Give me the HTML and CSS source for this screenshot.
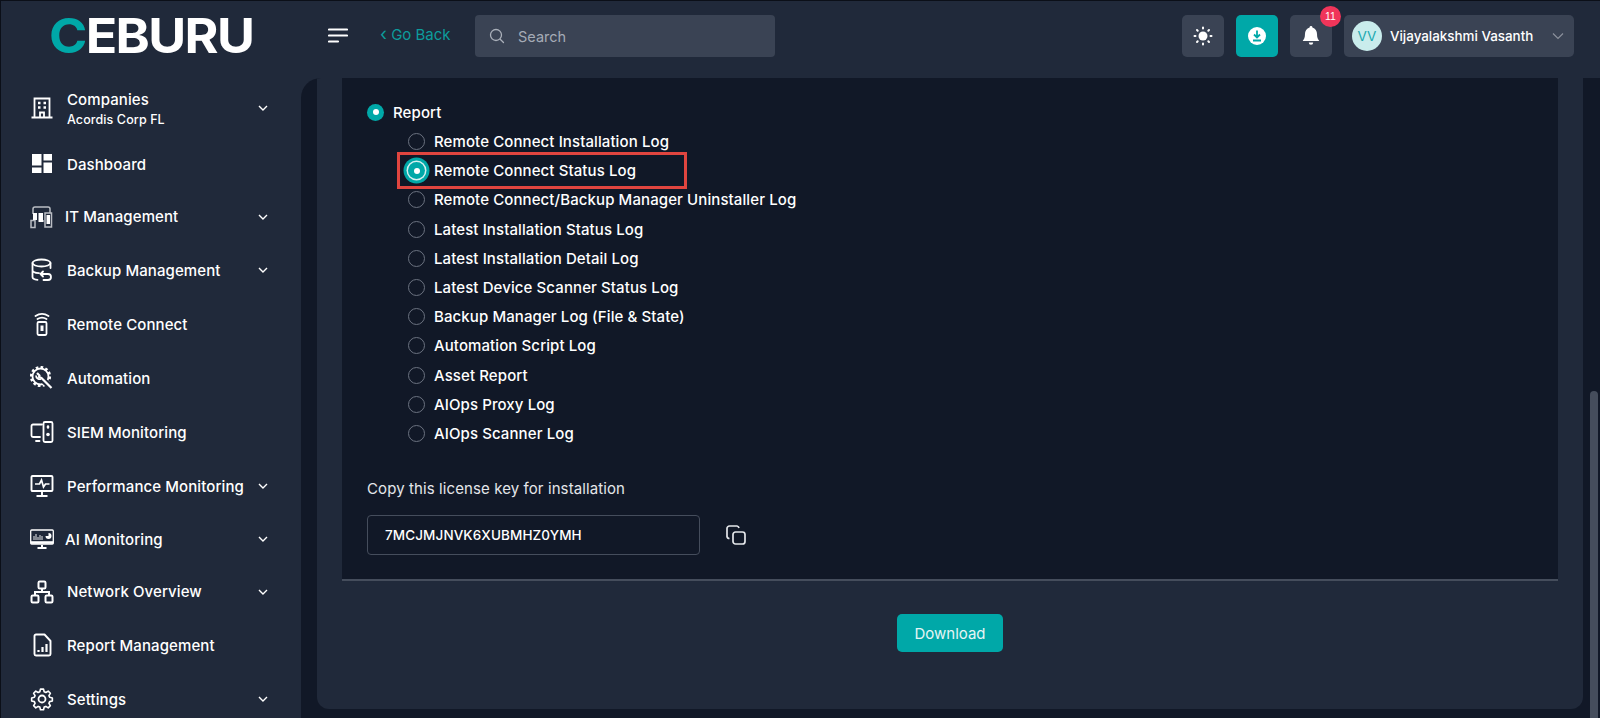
FILE: index.html
```html
<!DOCTYPE html>
<html lang="en">

<head>
  <meta charset="UTF-8">
  <title>Ceburu - Download</title>
  <link rel="stylesheet" href="styles.css">
</head>

<body>
  <div class="app">

    <aside class="sidebar">
      <div class="logo"><span class="logo-text"><span class="logo-c">C</span>EBURU</span></div>
      <nav class="nav">
        <a class="nav-item nav-companies">
          <svg class="nav-icon" viewBox="0 0 24 24" fill="none" stroke="#fff" stroke-width="1.8"><path d="M4.500 21V2.500h15V21M1.500 21.500h21M10 21v-4.500h4V21"/><path d="M8 7h2.500M13.500 7h2.500M8 11.500h2.500M13.500 11.500h2.500" stroke-width="2.400"/></svg>
          <span class="nav-text">Companies<small>Acordis Corp FL</small></span>
          <svg class="chev" viewBox="0 0 12 12"><path d="M2 4l4 4 4-4"/></svg>
        </a>
        <a class="nav-item nav-dash">
          <svg class="nav-icon" viewBox="0 0 24 24" fill="#fff"><path d="M2 2h9.500v11.500H2zM13.500 2H22v6.500h-8.500zM13.500 10.500H22V21h-8.500zM2 15.500h9.500V21H2z"/></svg>
          <span class="nav-text">Dashboard</span>
        </a>
        <a class="nav-item nav-it">
          <svg class="nav-icon" viewBox="0 0 24 24" fill="none" stroke="#b9bdc4" stroke-width="1.500"><path d="M3 9V4a2 2 0 0 1 2-2h13a2 2 0 0 1 2 2v4M1 15.500h4v7H1zM15 8h6.500v14H15zM9 16h5"/><path d="M3 8h4v7H3zM8.500 8h4.500v9H8.500zM16.500 10h3.500v9h-3.500z" fill="#fff" stroke="none"/></svg>
          <span class="nav-text">IT Management</span>
          <svg class="chev" viewBox="0 0 12 12"><path d="M2 4l4 4 4-4"/></svg>
        </a>
        <a class="nav-item">
          <svg class="nav-icon" viewBox="0 0 24 24" fill="none" stroke="#fff" stroke-width="1.800" stroke-linecap="round" stroke-linejoin="round"><ellipse cx="11.500" cy="5" rx="9" ry="3.500"/><path d="M2.500 5v14c0 1.500 2 2.500 5 2.800M20.500 5v5M2.500 12c0 1.800 3 3 6.500 3.200"/><path d="M13 13.500l-2.500 2.500 2.500 2.500M10.500 16H18a2.900 2.900 0 0 1 0 6h-4.500"/></svg>
          <span class="nav-text">Backup Management</span>
          <svg class="chev" viewBox="0 0 12 12"><path d="M2 4l4 4 4-4"/></svg>
        </a>
        <a class="nav-item">
          <svg class="nav-icon" viewBox="0 0 24 24" fill="none" stroke="#fff" stroke-width="1.800" stroke-linecap="round"><path d="M5.500 4c4-2.700 9-2.700 13 0M7.500 7c2.800-1.700 6.200-1.700 9 0"/><rect x="7.500" y="10" width="9" height="13" rx="1.200"/><path d="M12 13.500v5.500" stroke-width="3" stroke-linecap="butt"/></svg>
          <span class="nav-text">Remote Connect</span>
        </a>
        <a class="nav-item">
          <svg class="nav-icon" viewBox="0 0 24 24" fill="none" stroke="#fff"><circle cx="10.500" cy="10.500" r="8" stroke-width="1.800"/><circle cx="10.500" cy="10.500" r="9.300" stroke-width="2.600" stroke-dasharray="2.600 2.250"/><path d="M7 6.500l3 3 1 2.500L21.500 22" stroke="#20293a" stroke-width="6"/><path d="M7 7l2.500 2.500-.5 1.500 2.500 1 10 10" stroke-width="2.200" stroke-linejoin="round"/><path d="M6 9.500a3.800 3.800 0 0 0 5 3.500" stroke-width="1.800"/></svg>
          <span class="nav-text">Automation</span>
        </a>
        <a class="nav-item">
          <svg class="nav-icon" viewBox="0 0 24 24" fill="none" stroke="#fff" stroke-width="1.800" stroke-linecap="round"><path d="M12 4.500H3a1.500 1.500 0 0 0-1.500 1.500v9.500A1.500 1.500 0 0 0 3 17h7M6 21h3.500"/><rect x="13.500" y="2" width="9" height="20" rx="1.500"/><path d="M18 6.500v1" stroke-width="2.400"/><circle cx="18" cy="14.500" r="1.800" fill="#fff" stroke="none"/></svg>
          <span class="nav-text">SIEM Monitoring</span>
        </a>
        <a class="nav-item nav-perf">
          <svg class="nav-icon" viewBox="0 0 24 24" fill="none" stroke="#fff" stroke-width="1.900"><rect x="1.500" y="2" width="21" height="15" rx="1"/><path d="M5 10h4.500l2-4 2 7 2-3h4" stroke-width="1.700"/><path d="M12 17v4.500M6.500 22h11"/></svg>
          <span class="nav-text">Performance Monitoring</span>
          <svg class="chev" viewBox="0 0 12 12"><path d="M2 4l4 4 4-4"/></svg>
        </a>
        <a class="nav-item nav-ai">
          <svg class="nav-icon" viewBox="0 0 24 20" fill="none" stroke="#fff" stroke-width="1.300"><rect x=".7" y="1" width="22.600" height="14" rx="1"/><path d="M.7 13.500h22.600" stroke-width="2.600"/><path d="M4 11V7M6 11V5M8 11V8M10 11V6M12 11V7" stroke-width=".9"/><path d="M15.500 7a3 3 0 1 0 3-3v3z" fill="#fff" stroke="none"/><path d="M7.500 19h9M12 16v3" stroke-width="2"/></svg>
          <span class="nav-text">AI Monitoring</span>
          <svg class="chev" viewBox="0 0 12 12"><path d="M2 4l4 4 4-4"/></svg>
        </a>
        <a class="nav-item nav-net">
          <svg class="nav-icon" viewBox="0 0 24 24" fill="none" stroke="#fff" stroke-width="2"><rect x="8.500" y="1.500" width="7" height="7" rx="1.200"/><rect x="1.500" y="15.500" width="7" height="7" rx="1.200"/><rect x="15.500" y="15.500" width="7" height="7" rx="1.200"/><path d="M12 8.500V12M5 15.500V12h14v3.500"/></svg>
          <span class="nav-text">Network Overview</span>
          <svg class="chev" viewBox="0 0 12 12"><path d="M2 4l4 4 4-4"/></svg>
        </a>
        <a class="nav-item">
          <svg class="nav-icon" viewBox="0 0 24 24" fill="none" stroke="#fff" stroke-width="1.900" stroke-linejoin="round"><path d="M6 1.500h8.500L20.500 8v13a1.500 1.500 0 0 1-1.500 1.500H6A1.500 1.500 0 0 1 4.500 21V3A1.500 1.500 0 0 1 6 1.500z"/><path d="M8.500 19v-2M12.500 19v-5M16.500 19v-8" stroke-width="2.200"/></svg>
          <span class="nav-text">Report Management</span>
        </a>
        <a class="nav-item">
          <svg class="nav-icon" viewBox="0 0 24 24" fill="none" stroke="#fff" stroke-width="1.800" stroke-linejoin="round"><circle cx="12" cy="12" r="3.500"/><path d="M10.300 1h3.400l.7 3 1.900.8 2.600-1.600 2.400 2.400-1.600 2.600.8 1.900 3 .7v3.400l-3 .7-.8 1.900 1.600 2.600-2.400 2.400-2.600-1.600-1.900.8-.7 3h-3.400l-.7-3-1.900-.8-2.600 1.600-2.400-2.400 1.600-2.600-.8-1.900-3-.7v-3.400l3-.7.8-1.900-1.600-2.600 2.400-2.400 2.600 1.600 1.900-.8z" transform="translate(1.200 1.200) scale(.9)"/></svg>
          <span class="nav-text">Settings</span>
          <svg class="chev" viewBox="0 0 12 12"><path d="M2 4l4 4 4-4"/></svg>
        </a>
      </nav>
    </aside>

    <div class="main">
      <header class="topbar">
        <div class="topbar-left">
          <svg class="menu-icon" viewBox="0 0 20 16" fill="none" stroke="#fff" stroke-width="2.200" stroke-linecap="round"><path d="M1 1.500h18M1 7.500h18M1 13.500h9"/></svg>
          <a class="go-back"><span class="go-chev">&lsaquo;</span> Go Back</a>
          <div class="search">
            <svg viewBox="0 0 16 16" fill="none" stroke="#aab0ba" stroke-width="1.300" stroke-linecap="round"><circle cx="7" cy="7" r="5.500"/><path d="M11.200 11.200l3.300 3.300"/></svg>
            <span>Search</span>
          </div>
        </div>
        <div class="topbar-right">
          <button class="icon-btn">
            <svg viewBox="0 0 20 20" fill="#fff"><circle cx="10" cy="10" r="4.500"/><g stroke="#fff" stroke-width="2" stroke-linecap="round"><path d="M10 1.500v1M10 17.500v1M1.500 10h1M17.500 10h1M4 4l.7.700M15.300 15.300l.7.700M4 16l.7-.700M15.300 4.700l.7-.700"/></g></svg>
          </button>
          <button class="icon-btn icon-btn-teal">
            <svg viewBox="0 0 20 20"><circle cx="10" cy="10" r="9" fill="#fff"/><path d="M10 4.500v6.500M7 8.500l3 3 3-3M6 14.500h8" fill="none" stroke="#00a8a8" stroke-width="1.800"/></svg>
          </button>
          <button class="icon-btn bell-btn">
            <svg viewBox="0 0 20 20" fill="#fff"><path d="M10 1a1.300 1.300 0 0 1 1.300 1.300C14 3 15.500 5.500 15.500 8.500c0 3.500 1 4.500 2 6H2.500c1-1.500 2-2.500 2-6 0-3 1.500-5.500 4.200-6.200A1.300 1.300 0 0 1 10 1zM8 16h4a2 2 0 0 1-4 0z"/></svg>
            <span class="badge">11</span>
          </button>
          <div class="user">
            <span class="avatar">VV</span>
            <span class="user-name">Vijayalakshmi Vasanth</span>
            <svg viewBox="0 0 12 12"><path d="M1 3.500l5 5 5-5"/></svg>
          </div>
        </div>
      </header>

      <div class="content">
        <div class="panel">
          <div class="panel-body">
            <label class="radio-row radio-report"><span class="radio on"></span>Report</label>
            <div class="sub-list">
              <label class="radio-row"><span class="radio"></span>Remote Connect Installation Log</label>
              <label class="radio-row selected"><span class="radio on big"></span>Remote Connect Status Log</label>
              <label class="radio-row"><span class="radio"></span>Remote Connect/Backup Manager Uninstaller Log</label>
              <label class="radio-row"><span class="radio"></span>Latest Installation Status Log</label>
              <label class="radio-row"><span class="radio"></span>Latest Installation Detail Log</label>
              <label class="radio-row"><span class="radio"></span>Latest Device Scanner Status Log</label>
              <label class="radio-row"><span class="radio"></span>Backup Manager Log (File &amp; State)</label>
              <label class="radio-row"><span class="radio"></span>Automation Script Log</label>
              <label class="radio-row"><span class="radio"></span>Asset Report</label>
              <label class="radio-row"><span class="radio"></span>AIOps Proxy Log</label>
              <label class="radio-row"><span class="radio"></span>AIOps Scanner Log</label>
            </div>
            <div class="key-label">Copy this license key for installation</div>
            <div class="key-row">
              <div class="key-input">7MCJMJNVK6XUBMHZ0YMH</div>
              <svg class="copy-icon" viewBox="0 0 20 20" fill="none" stroke="#e4e6ea" stroke-width="1.700" stroke-linejoin="round"><rect x="7" y="7" width="12" height="12" rx="2.500"/><path d="M3.500 13.500A2.500 2.500 0 0 1 1 11.500V3.500A2.500 2.500 0 0 1 3.500 1h7.500a2.500 2.500 0 0 1 2 2"/></svg>
            </div>
          </div>
          <div class="panel-footer">
            <button class="download-btn">Download</button>
          </div>
        </div>
        <div class="scrollbar"><div class="scroll-thumb"></div></div>
      </div>
    </div>

  </div>
</body>

</html>
```

FILE: styles.css
```css
* {
  box-sizing: border-box;
}

html,
body {
  margin: 0;
  height: 100%;
  overflow: hidden;
}

body {
  font-family: Inter, "Open Sans", sans-serif;
  background-color: #20293a;
  color: #fff;
}

.app {
  display: flex;
  height: 718px;
  border-top: 1px solid #0b0f18;
  border-left: 1px solid #0b0f18;
}

/* sidebar */

.sidebar {
  width: 300px;
  flex-shrink: 0;
  background-color: #20293a;
  overflow: hidden;
}

.logo {
  height: 77px;
  padding: 8px 0 0 48px;
  font-size: 48px;
  font-weight: 700;
  letter-spacing: -1.5px;
  line-height: 54px;
  color: #fff;
}

.logo-text {
  display: inline-block;
  transform: scaleX(1.08);
  transform-origin: left center;
}

.logo-c {
  color: #00a8a8;
}

.nav-item {
  display: flex;
  align-items: center;
  height: 54px;
  padding-left: 29px;
  font-size: 15px;
  font-weight: 500;
  letter-spacing: .1px;
  position: relative;
}

.nav-companies {
  height: 60px;
}

.nav-dash {
  height: 52px;
}

.nav-it,
.nav-net {
  height: 53px;
}

.nav-ai {
  height: 52px;
}

.nav-icon {
  width: 24px;
  height: 24px;
  flex-shrink: 0;
  margin-right: 13px;
}

.nav-it .nav-icon,
.nav-ai .nav-icon {
  margin-right: 11px;
}

.nav-text small {
  display: block;
  font-size: 12.500px;
  margin-top: 3px;
}

.chev {
  width: 12px;
  height: 12px;
  position: absolute;
  left: 256px;
  fill: none;
  stroke: #fff;
  stroke-width: 1.400;
}

/* top bar */

.main {
  flex: 1;
  min-width: 0;
  display: flex;
  flex-direction: column;
}

.topbar {
  height: 77px;
  flex-shrink: 0;
  display: flex;
  justify-content: space-between;
  align-items: flex-start;
  padding: 14px 26px 0 27px;
}

.topbar-left,
.topbar-right {
  display: flex;
  align-items: center;
}

.menu-icon {
  width: 20px;
  height: 16px;
  margin-right: 32px;
  margin-bottom: 1px;
}

.go-back {
  color: #0d9c9c;
  font-size: 15px;
  width: 95px;
  margin-bottom: 4px;
}

.go-chev {
  font-size: 18px;
  line-height: 15px;
}

.search {
  width: 300px;
  height: 42px;
  background-color: #3a4354;
  border-radius: 4px;
  display: flex;
  align-items: center;
  padding-left: 14px;
  color: #a5abb6;
  font-size: 14.500px;
}

.search svg {
  width: 16px;
  height: 16px;
  margin-right: 13px;
}

.icon-btn {
  width: 42px;
  height: 42px;
  border: none;
  border-radius: 5px;
  background-color: #3a4354;
  padding: 0;
  margin-right: 12px;
  display: flex;
  align-items: center;
  justify-content: center;
  position: relative;
}

.icon-btn svg {
  width: 20px;
  height: 20px;
}

.icon-btn-teal {
  background-color: #00a8a8;
}

.bell-btn svg {
  width: 22px;
  height: 22px;
}

.badge {
  position: absolute;
  top: -9px;
  right: -9px;
  width: 21px;
  height: 21px;
  border-radius: 50%;
  background-color: #f0355a;
  color: #fff;
  font-size: 10.500px;
  line-height: 21px;
  text-align: center;
}

.user {
  width: 230px;
  height: 42px;
  background-color: #3a4354;
  border-radius: 5px;
  display: flex;
  align-items: center;
  padding-left: 8px;
}

.avatar {
  width: 30px;
  height: 30px;
  border-radius: 50%;
  background-color: #c9ecec;
  color: #1aa8b0;
  font-size: 13.500px;
  line-height: 30px;
  text-align: center;
  margin-right: 8px;
}

.user-name {
  font-size: 13.400px;
  font-weight: 500;
  flex: 1;
}

.user svg {
  width: 12px;
  height: 12px;
  margin-right: 10px;
  fill: none;
  stroke: #8b919c;
  stroke-width: 1.200;
}

/* content */

.content {
  flex: 1;
  min-height: 0;
  background-color: #111827;
  border-top-left-radius: 20px;
  padding-left: 16px;
  display: flex;
  overflow: hidden;
}

.panel {
  width: 1266px;
  height: 631px;
  background-color: #20293a;
  border-radius: 0 0 12px 12px;
  padding: 0 25px;
}

.panel-body {
  height: 503px;
  background-color: #111827;
  border-bottom: 2px solid #454d5c;
  padding: 22px 25px 0;
  font-size: 15px;
  letter-spacing: .1px;
}

.radio-row {
  display: flex;
  align-items: center;
  height: 29.200px;
  position: relative;
  font-weight: 500;
}

.radio-report {
  height: 24px;
}

.sub-list {
  padding-left: 41px;
  margin-top: 3px;
}

.radio {
  width: 17px;
  height: 17px;
  border-radius: 50%;
  border: 1px solid #6b7280;
  margin-right: 9px;
  flex-shrink: 0;
  position: relative;
}

.radio.on {
  background-color: #00a8a8;
  border: none;
}

.radio.on::after {
  content: "";
  position: absolute;
  left: 5.500px;
  top: 5.500px;
  width: 6px;
  height: 6px;
  border-radius: 50%;
  background-color: #fff;
}

.radio.big {
  box-shadow: 0 0 0 1.500px #d5f0f0, 0 0 0 4.500px #00a8a8;
}

/* red box from the annotated screenshot */
.selected::before {
  content: "";
  box-sizing: border-box;
  position: absolute;
  left: -11px;
  top: -4.500px;
  width: 290px;
  height: 37px;
  border: 3px solid #e0453f;
}

.key-label {
  margin-top: 31px;
  font-weight: 400;
  color: #e4e6ea;
}

.key-row {
  display: flex;
  align-items: center;
  margin-top: 17px;
}

.key-input {
  width: 333px;
  height: 40px;
  border: 1px solid #454d5c;
  border-radius: 4px;
  padding-left: 17px;
  line-height: 38px;
  font-size: 13.500px;
  font-weight: 500;
}

.copy-icon {
  width: 20px;
  height: 20px;
  margin-left: 26px;
}

.panel-footer {
  display: flex;
  justify-content: center;
  padding-top: 33px;
}

.download-btn {
  width: 106px;
  height: 38px;
  border: none;
  border-radius: 5px;
  background-color: #00a8a8;
  color: #e6f5f5;
  font-family: inherit;
  font-size: 15px;
  font-weight: 400;
}

.scrollbar {
  width: 8px;
  margin-left: 7px;
  padding-top: 313px;
}

.scroll-thumb {
  height: 400px;
  background-color: #454d5c;
  border-radius: 4px;
}
```
